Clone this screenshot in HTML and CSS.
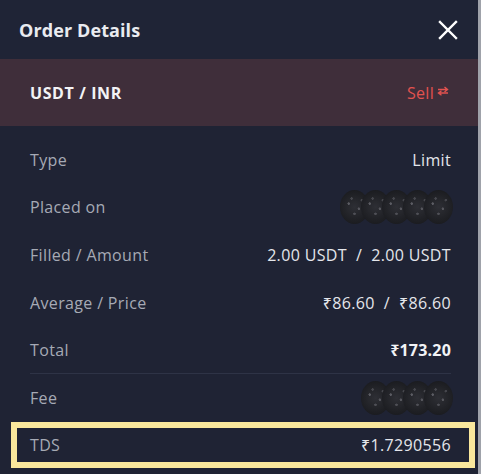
FILE: index.html
```html
<!DOCTYPE html>
<html lang="en">
<head>
<meta charset="utf-8">
<title>Order Details</title>
<link rel="stylesheet" href="styles.css">
</head>
<body>
<div class="panel">
  <header class="head">
    <h1 class="title">Order Details</h1>
    <svg class="close" width="20" height="20" viewBox="0 0 20 20" aria-label="Close">
      <path d="M2 2 L18 18 M18 2 L2 18" stroke="#ffffff" stroke-width="2.4" stroke-linecap="square" fill="none"/>
    </svg>
  </header>
  <div class="pair">
    <span class="pair-name">USDT / INR</span>
    <span class="side">Sell
      <svg class="swap" width="12" height="10" viewBox="0 0 12 10">
        <path d="M1 3.5 H10 M7.5 1 L10.5 3.5 L7.5 6" stroke="#e2524f" stroke-width="1.4" fill="none"/>
        <path d="M11 7 H2 M4.5 4.8 L1.5 7 L4.5 9.2" stroke="#e2524f" stroke-width="1.4" fill="none"/>
      </svg>
    </span>
  </div>
  <div class="list">
    <div class="row"><span class="label">Type</span><span class="value">Limit</span></div>
    <div class="row"><span class="label">Placed on</span>
      <span class="blur blur5"><i></i><i></i><i></i><i></i><i></i></span></div>
    <div class="row"><span class="label">Filled / Amount</span><span class="value">2.00 USDT&nbsp; /&nbsp; 2.00 USDT</span></div>
    <div class="row"><span class="label">Average / Price</span><span class="value">₹86.60&nbsp; / &nbsp;₹86.60</span></div>
    <div class="row row-sep"><span class="label">Total</span><span class="value strong">₹173.20</span></div>
    <div class="row"><span class="label">Fee</span>
      <span class="blur blur4"><i></i><i></i><i></i><i></i></span></div>
    <div class="row row-hl"><span class="label">TDS</span><span class="value">₹1.7290556</span></div>
  </div>
</div>
</body>
</html>
```

FILE: styles.css
```css
* { box-sizing: border-box; }
html, body { margin: 0; padding: 0; }
body {
  width: 481px;
  height: 474px;
  overflow: hidden;
  background: #1f2334;
  font-family: "Open Sans", "Noto Sans", sans-serif;
}
.panel {
  height: 474px;
  background: #1f2334;
  border-right: 3px solid #9fa2aa;
}
.head {
  height: 59px;
  background: #1f2436;
  display: flex;
  align-items: center;
  justify-content: space-between;
  padding: 0 20px 0 19px;
}
.title {
  margin: 0;
  font-size: 18px;
  font-weight: 700;
  color: #e9ebf0;
  letter-spacing: 0.1px;
}
.close { display: block; margin-top: 1px; }
.pair {
  height: 67px;
  background: #3f2e3a;
  display: flex;
  align-items: center;
  justify-content: space-between;
  padding: 0 29px 0 30px;
}
.pair-name {
  font-size: 16px;
  font-weight: 700;
  color: #f3f3f5;
  letter-spacing: 0.6px;
}
.side {
  display: flex;
  align-items: center;
  gap: 3px;
  font-size: 16px;
  letter-spacing: 0.3px;
  color: #e2524f;
}
.swap { display: block; margin-top: -3px; }
.list {
  padding: 10px 27px 0 30px;
}
.row {
  height: 47.6px;
  display: flex;
  align-items: center;
  justify-content: space-between;
}
.row-sep { border-bottom: 1px solid #2e3346; }
.label {
  font-size: 16px;
  letter-spacing: 0.35px;
  color: #a6aab5;
}
.value {
  font-size: 16px;
  letter-spacing: 0.35px;
  color: #e4e6eb;
}
.strong { font-weight: 700; color: #f2f3f6; letter-spacing: 0.2px; }
.row-hl {
  height: 46px;
  margin: 0 -24px 0 -19px;
  border: 6px solid #f9e79c;
  padding: 0 18px 0 13px;
}
.blur {
  display: flex;
  height: 34px;
  align-items: center;
  margin-right: -2px;
}
.blur i {
  display: block;
  width: 29px;
  height: 34px;
  border-radius: 50%;
  margin-left: -8px;
  background:
    radial-gradient(circle at 30% 40%, rgba(190,190,200,0.35) 0 1px, transparent 1.5px),
    radial-gradient(circle at 65% 55%, rgba(190,190,200,0.3) 0 1px, transparent 1.5px),
    radial-gradient(circle at 50% 70%, rgba(170,170,180,0.3) 0 1px, transparent 1.5px),
    radial-gradient(circle at 40% 25%, rgba(170,170,180,0.25) 0 1px, transparent 1.5px),
    radial-gradient(circle at 75% 30%, rgba(170,170,180,0.25) 0 1px, transparent 1.5px),
    radial-gradient(circle, #2e2f35 0%, #1a1b1f 80%);
}
.blur i:first-child { margin-left: 0; }
```
